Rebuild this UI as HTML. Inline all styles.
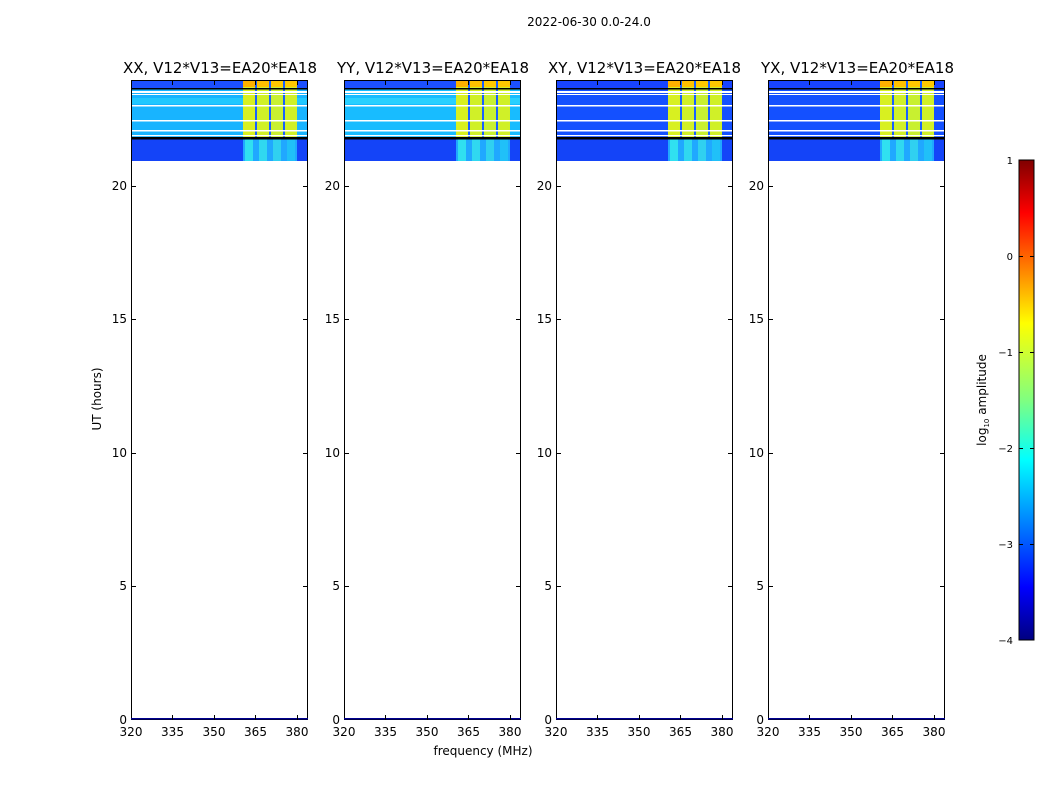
<!DOCTYPE html>
<html><head><meta charset="utf-8"><style>
html,body{margin:0;padding:0;background:#fff;width:1050px;height:800px;overflow:hidden;}
svg{position:absolute;left:0;top:0;font-family:"DejaVu Sans","Liberation Sans",sans-serif;}
</style></head><body>
<svg width="1050" height="800" viewBox="0 0 1050 800">
<defs>
<linearGradient id="cb" x1="0" y1="0" x2="0" y2="1">
<stop offset="0" stop-color="#800000"/><stop offset="0.11" stop-color="#ff0000"/>
<stop offset="0.34" stop-color="#ffff00"/><stop offset="0.5" stop-color="#80ff80"/>
<stop offset="0.625" stop-color="#00ffff"/><stop offset="0.89" stop-color="#0000ff"/>
<stop offset="1" stop-color="#000080"/></linearGradient>
<g id="cols">
<rect x="112" y="0" width="54" height="57" fill="#50f0a0"/>
<rect x="112" y="2" width="12" height="55" fill="#d8f020"/>
<rect x="126" y="2" width="12" height="55" fill="#d0f028"/>
<rect x="140" y="2" width="12" height="55" fill="#c8f030"/>
<rect x="154" y="2" width="12" height="55" fill="#d0f028"/>
<rect x="112" y="1" width="12" height="6" fill="#ffb000"/>
<rect x="126" y="1" width="12" height="6" fill="#ffc000"/>
<rect x="140" y="1" width="12" height="6" fill="#ffc800"/>
<rect x="154" y="1" width="12" height="6" fill="#ffc800"/>
<rect x="124" y="0" width="2" height="57" fill="#1860ff"/>
<rect x="138" y="0" width="2" height="57" fill="#1860ff"/>
<rect x="152" y="0" width="2" height="57" fill="#1860ff"/>
<rect x="112" y="59" width="54" height="22" fill="#20a8ff"/>
<rect x="114" y="59" width="8" height="22" fill="#30e0f0"/>
<rect x="128" y="59" width="8" height="22" fill="#30d8f0"/>
<rect x="142" y="59" width="8" height="22" fill="#30d0f0"/>
<rect x="156" y="59" width="8" height="22" fill="#20c0f8"/>
</g>
<g id="lines">
<rect x="0" y="8" width="177" height="1.5" fill="#000"/>
<rect x="0" y="11" width="177" height="2" fill="#fff"/>
<rect x="0" y="14" width="177" height="1" fill="#fff"/>
<rect x="0" y="25" width="177" height="1.5" fill="#fff"/>
<rect x="0" y="40" width="177" height="1.5" fill="#fff"/>
<rect x="0" y="50" width="177" height="1.5" fill="#fff"/>
<rect x="0" y="55" width="177" height="1.2" fill="#fff"/>
<rect x="0" y="57" width="177" height="2.5" fill="#000"/>
</g>
<g id="axes" fill="none" stroke="#000" stroke-width="1">
<rect x="0.5" y="80.5" width="176" height="639"/>
<rect x="0" y="718" width="177" height="1.5" fill="#00008f" stroke="none"/>
<path d="M0 186.5h5M0 319.5h5M0 453.5h5M0 586.5h5M177 186.5h-5M177 319.5h-5M177 453.5h-5M177 586.5h-5
M41.5 720v-5M83.5 720v-5M124.5 720v-5M166.5 720v-5M41.5 80v5M83.5 80v5M124.5 80v5M166.5 80v5"/>
</g>
<g id="lbl" font-size="12" fill="#000">
<text x="-4" y="724" text-anchor="end">0</text>
<text x="-4" y="590" text-anchor="end">5</text>
<text x="-4" y="457" text-anchor="end">10</text>
<text x="-4" y="323" text-anchor="end">15</text>
<text x="-4" y="190" text-anchor="end">20</text>
<text x="0" y="736" text-anchor="middle">320</text>
<text x="41.5" y="736" text-anchor="middle">335</text>
<text x="83" y="736" text-anchor="middle">350</text>
<text x="124.5" y="736" text-anchor="middle">365</text>
<text x="166" y="736" text-anchor="middle">380</text>
</g>
</defs>

<g transform="translate(131,0)">
<g transform="translate(0,80)">
<rect width="177" height="8" fill="#1c50ff"/>
<rect y="8" width="177" height="49" fill="#18b4ff"/>
<rect y="18" width="177" height="6" fill="#20c8ff"/>
<rect y="59" width="177" height="22" fill="#1444f8"/>
<use href="#cols"/><use href="#lines"/>
</g>
<use href="#axes"/><use href="#lbl"/>
<text x="-8" y="73" font-size="15" textLength="194" lengthAdjust="spacingAndGlyphs">XX, V12*V13=EA20*EA18</text>
</g>

<g transform="translate(344,0)">
<g transform="translate(0,80)">
<rect width="177" height="8" fill="#1c50ff"/>
<rect y="8" width="177" height="49" fill="#18bcff"/>
<rect y="18" width="177" height="6" fill="#28d0ff"/>
<rect y="59" width="177" height="22" fill="#1444f8"/>
<use href="#cols"/><use href="#lines"/>
</g>
<use href="#axes"/><use href="#lbl"/>
<text x="-7" y="73" font-size="15" textLength="192" lengthAdjust="spacingAndGlyphs">YY, V12*V13=EA20*EA18</text>
</g>

<g transform="translate(556,0)">
<g transform="translate(0,80)">
<rect width="177" height="8" fill="#1844ff"/>
<rect y="8" width="177" height="49" fill="#1450ff"/>
<rect y="59" width="177" height="22" fill="#1444f8"/>
<use href="#cols"/><use href="#lines"/>
</g>
<use href="#axes"/><use href="#lbl"/>
<text x="-8" y="73" font-size="15" textLength="193" lengthAdjust="spacingAndGlyphs">XY, V12*V13=EA20*EA18</text>
</g>

<g transform="translate(768,0)">
<g transform="translate(0,80)">
<rect width="177" height="8" fill="#1844ff"/>
<rect y="8" width="177" height="49" fill="#1450ff"/>
<rect y="59" width="177" height="22" fill="#1444f8"/>
<use href="#cols"/><use href="#lines"/>
</g>
<use href="#axes"/><use href="#lbl"/>
<text x="-7" y="73" font-size="15" textLength="193" lengthAdjust="spacingAndGlyphs">YX, V12*V13=EA20*EA18</text>
</g>

<text x="589" y="26" font-size="12" text-anchor="middle">2022-06-30 0.0-24.0</text>
<text x="483" y="755" font-size="12" text-anchor="middle">frequency (MHz)</text>
<text transform="translate(101,399) rotate(-90)" font-size="12" text-anchor="middle">UT (hours)</text>

<rect x="1019" y="160" width="15" height="480" fill="url(#cb)" stroke="#000"/>
<path d="M1019 256.5h4M1034 256.5h-4M1019 352.5h4M1034 352.5h-4M1019 448.5h4M1034 448.5h-4M1019 544.5h4M1034 544.5h-4" stroke="#000"/>
<g font-size="10" text-anchor="end" fill="#000">
<text x="1013" y="164">1</text>
<text x="1013" y="260">0</text>
<text x="1013" y="356">−1</text>
<text x="1013" y="452">−2</text>
<text x="1013" y="548">−3</text>
<text x="1013" y="644">−4</text>
</g>
<text transform="translate(986,400) rotate(-90)" font-size="12" text-anchor="middle">log<tspan font-size="7" dy="3">10</tspan><tspan dy="-3"> amplitude</tspan></text>
</svg>
</body></html>
